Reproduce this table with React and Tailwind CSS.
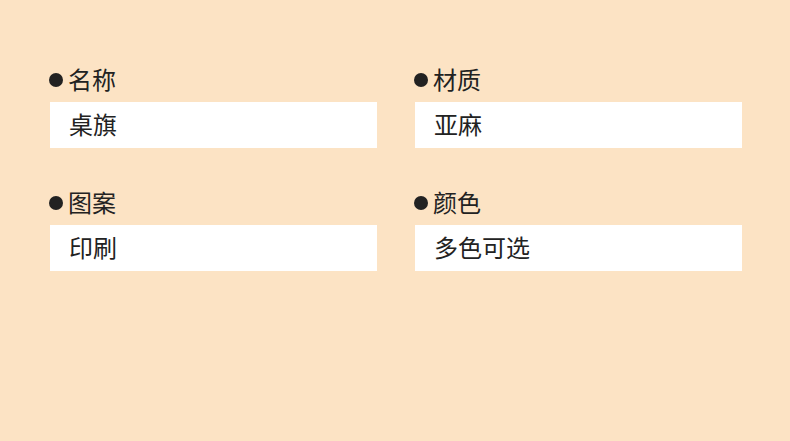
const specs = [
  { label: "名称", value: "桌旗" },
  { label: "材质", value: "亚麻" },
  { label: "图案", value: "印刷" },
  { label: "颜色", value: "多色可选" },
];

const App = () => {
  return (
    <div
      className="w-[790px] h-[441px] bg-[#fce3c4] pt-[65px] pl-[50px] text-[#222222]"
      style={{ fontFamily: '"Noto Sans CJK SC", "Noto Sans", sans-serif' }}
    >
      <div className="grid grid-cols-[327px_327px] gap-x-[38px] gap-y-[40px]">
        {specs.map((item) => (
          <div key={item.label} className="flex flex-col">
            <div className="flex items-center h-[30px] -ml-[1px]">
              <span className="w-[14px] h-[14px] rounded-full bg-[#222222] mr-[5px]" />
              <span className="text-[24px] leading-[30px] -mt-[3px]">{item.label}</span>
            </div>
            <div className="mt-[7px] h-[46px] bg-white flex items-center pl-[19px] text-[24px]">
              <span className="-mt-[3px]">{item.value}</span>
            </div>
          </div>
        ))}
      </div>
    </div>
  );
};

export default App;
